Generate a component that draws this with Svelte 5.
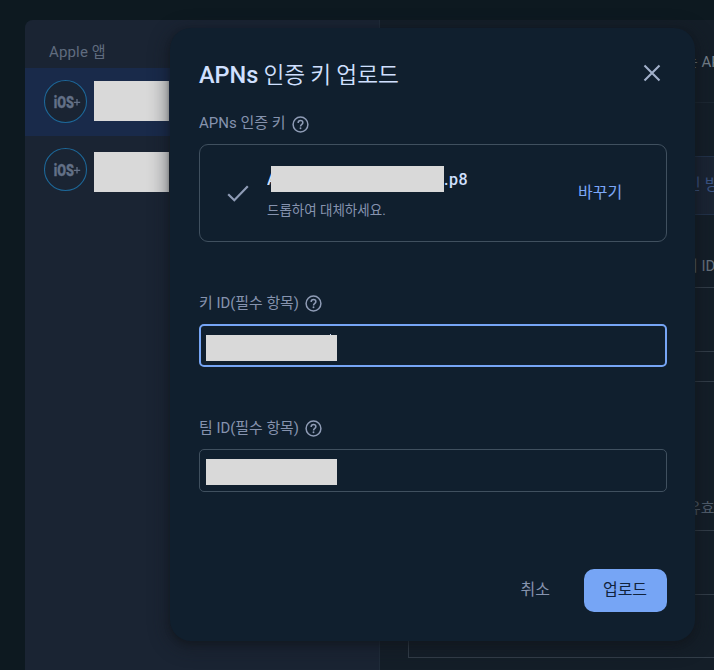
<script>
  const apps = [{ active: true }, { active: false }];
  const fields = [
    { id: 'key', label: '키 ID(필수 항목)', focused: true },
    { id: 'team', label: '팀 ID(필수 항목)', focused: false }
  ];
</script>

{#snippet help()}
  <svg class="help" viewBox="0 0 17 17" aria-hidden="true">
    <circle cx="8.5" cy="8.5" r="7.4" />
    <path d="M6.15 6.9c0-1.4 1-2.35 2.35-2.35s2.35.9 2.35 2.1c0 1.65-2.3 1.85-2.3 3.75" />
    <circle class="dot" cx="8.5" cy="12.3" r=".95" />
  </svg>
{/snippet}

<div class="page">
  <div class="card">
    <aside>
      <h2>Apple 앱</h2>
      {#each apps as app}
        <div class="app" class:active={app.active}>
          <svg class="badge" viewBox="0 0 43 43">
            <circle cx="21.5" cy="21.5" r="21" />
            <text class="ios" x="9.8" y="27.5" textLength="20.2" lengthAdjust="spacingAndGlyphs">iOS</text>
            <path d="M29.8 22.3h6.4M33 19v6.6" />
          </svg>
          <span class="mask app-name"></span>
        </div>
      {/each}
    </aside>
    <main>
      <header><span>는 API</span></header>
      <div class="banner"><span>인 방법</span></div>
      <div class="label first">키 ID</div>
      <div class="table one"><div></div></div>
      <div class="table two"><div class="validity">유효</div><div></div><div></div></div>
    </main>
  </div>
</div>

<div class="dialog" role="dialog" aria-label="APNs 인증 키 업로드">
  <div class="title">
    <h1><b>APNs</b> 인증 키 업로드</h1>
    <svg class="close" viewBox="0 0 18 18"><path d="M1.5 1.5l15 15M16.5 1.5l-15 15" /></svg>
  </div>
  <div class="caption apns"><span>APNs 인증 키</span>{@render help()}</div>
  <div class="drop">
    <svg class="check" viewBox="0 0 22 17"><path d="M1.2 9.2l6.1 6L20.8 1.3" /></svg>
    <div class="file">
      <div class="filename"><span class="initial">A</span><span class="mask"></span><span>.p8</span></div>
      <div class="hint">드롭하여 대체하세요.</div>
    </div>
    <span class="change">바꾸기</span>
  </div>
  {#each fields as field}
    <div class="field {field.id}">
      <div class="caption"><span>{field.label}</span>{@render help()}</div>
      <div class="input" class:focused={field.focused}><span class="mask"></span></div>
    </div>
  {/each}
  <footer>
    <span class="cancel">취소</span>
    <button>업로드</button>
  </footer>
</div>

<style>
  :global(body) {
    margin: 0;
    overflow: hidden;
    background: #0d1920;
  }
  .page, .dialog {
    box-sizing: border-box;
    font-family: Roboto, "Noto Sans CJK KR", sans-serif;
    font-weight: 400;
  }
  .page *, .dialog * { box-sizing: border-box; }
  h1, h2 { margin: 0; font-weight: 400; }
  svg { display: block; flex: none; overflow: visible; }
  .mask { display: block; flex: none; background: #d9d9d9; }

  .page {
    width: 714px;
    height: 670px;
    padding: 20px 0 0 25px;
    overflow: hidden;
  }
  .card {
    display: flex;
    width: 720px;
    height: 660px;
    border-radius: 8px 0 0 0;
    overflow: hidden;
    background: #141e28;
  }
  aside {
    flex: none;
    width: 355px;
    background: #1a2433;
    border-right: 1px solid #202c3a;
  }
  h2 {
    height: 48px;
    padding: 21px 0 0 24px;
    font-size: 15px;
    line-height: 22px;
    letter-spacing: .15px;
    color: #606c7f;
  }
  .app {
    display: flex;
    height: 68px;
    padding: 12px 0 0 19px;
  }
  .app.active { background: #192a4a; }
  .badge { width: 43px; height: 43px; }
  .badge circle { fill: #1a2433; stroke: #1d6798; stroke-width: 1.1; }
  .ios { font: 900 16.5px Roboto, sans-serif; fill: #627087; stroke: #627087; stroke-width: .3; }
  .badge path { stroke: #627087; stroke-width: 1.3; }
  .app-name { width: 75px; height: 40px; margin: 1px 0 0 7px; }
  .app:not(.active) .app-name { margin-top: 4px; }

  main {
    flex: 1;
    overflow: hidden;
    white-space: nowrap;
    font-size: 15px;
    color: #68737f;
  }
  header {
    height: 83px;
    padding: 31px 0 0 304px;
    line-height: 22px;
    color: #78838e;
    border-bottom: 1px solid #1c2732;
  }
  .banner {
    height: 59px;
    margin: 53px 0 0 28px;
    padding: 17px 0 0 278px;
    line-height: 22px;
    font-size: 16px;
    color: #3c5687;
    background: #1a2433;
    border: solid #22324a;
    border-width: 1px 0;
  }
  .label { height: 72px; padding: 39px 0 0 304px; line-height: 24px; }
  .table {
    margin-left: 28px;
    border: 1px solid #333e49;
  }
  .table div { border-bottom: 1px solid #333e49; height: 64px; }
  .table.one { height: 65px; border-bottom: 0; }
  .table.two { margin-top: 29px; height: 277px; }
  .table .validity { height: 149px; padding: 115px 0 0 278px; line-height: 22px; color: #525f6e; }
  .table.two div:last-child { border: 0; }

  .dialog {
    position: absolute;
    left: 170px;
    top: 28px;
    width: 525px;
    height: 613px;
    padding: 30px 28px 0 29px;
    border-radius: 21px;
    background: #101f2e;
    box-shadow: 0 3px 5px rgba(18, 22, 28, .5), 0 4px 18px 4px rgba(18, 22, 28, .45);
    color: #8693ae;
    white-space: nowrap;
  }
  .title { display: flex; justify-content: space-between; height: 54px; }
  h1 {
    padding-top: 1px;
    font-size: 22.7px;
    line-height: 32px;
    color: #d0e0ff;
    font-family: Roboto, "Noto Sans CJK KR", sans-serif;
    font-weight: 350;
    word-spacing: -.4px;
  }
  b { font-size: 23.5px; font-weight: 500; }
  .close { width: 18px; height: 18px; margin: 6px 6px 0 0; }
  .close path { fill: none; stroke: #a1b0ca; stroke-width: 2.1; }
  .caption {
    display: flex;
    align-items: center;
    gap: 6px;
    height: 22px;
    font-size: 15px;
    line-height: 22px;
  }
  .help { width: 17px; height: 17px; margin-top: 2px; }
  .help circle, .help path { fill: none; stroke: #8f9cb6; stroke-width: 1.5; }
  .help .dot { fill: #8f9cb6; stroke: none; }
  .drop {
    display: flex;
    height: 98px;
    margin-top: 10px;
    border: 1px solid #40505f;
    border-radius: 9px;
  }
  .check { width: 22px; height: 17px; margin: 40px 0 0 27px; }
  .check path { fill: none; stroke: #8f9cb6; stroke-width: 2.2; }
  .file { width: 329px; padding: 21px 0 0 18px; }
  .filename { display: flex; height: 26px; font-size: 16px; font-weight: 500; line-height: 28px; letter-spacing: .5px; color: #d0e0ff; }
  .initial { width: 4px; overflow: hidden; }
  .filename .mask { width: 173px; height: 26px; }
  .hint { margin-top: 7px; font-size: 13.5px; line-height: 22px; }
  .change { margin-top: 36px; font-size: 16px; line-height: 24px; color: #7ca7f8; }
  .field { margin-top: 49px; }
  .field .caption { font-size: 14.9px; }
  .field .caption span { padding-top: 1px; }
  .field .help { margin-top: 3px; }
  .input {
    height: 43px;
    margin-top: 11px;
    padding: 9px 0 0 6px;
    border: 1px solid #40505f;
    border-radius: 5px;
  }
  .input.focused { border: 2px solid #76a5f5; padding: 9px 0 0 5px; }
  .input .mask { width: 131px; height: 26px; }
  .focused .mask::before {
    content: "";
    display: block;
    width: 1px;
    height: 1px;
    margin-left: 124px;
    background: #d0e0ff;
    transform: translateY(-1px);
  }
  footer { display: flex; justify-content: flex-end; align-items: center; height: 43px; margin-top: 77px; font-size: 16px; }
  .cancel { margin-right: 34px; padding-bottom: 6px; }
  button {
    width: 83px;
    height: 43px;
    padding: 0 1px 5px 0;
    border: 0;
    border-radius: 10px;
    background: #76a5f5;
    color: #11233c;
    font: 400 16px Roboto, "Noto Sans CJK KR", sans-serif;
  }
</style>
